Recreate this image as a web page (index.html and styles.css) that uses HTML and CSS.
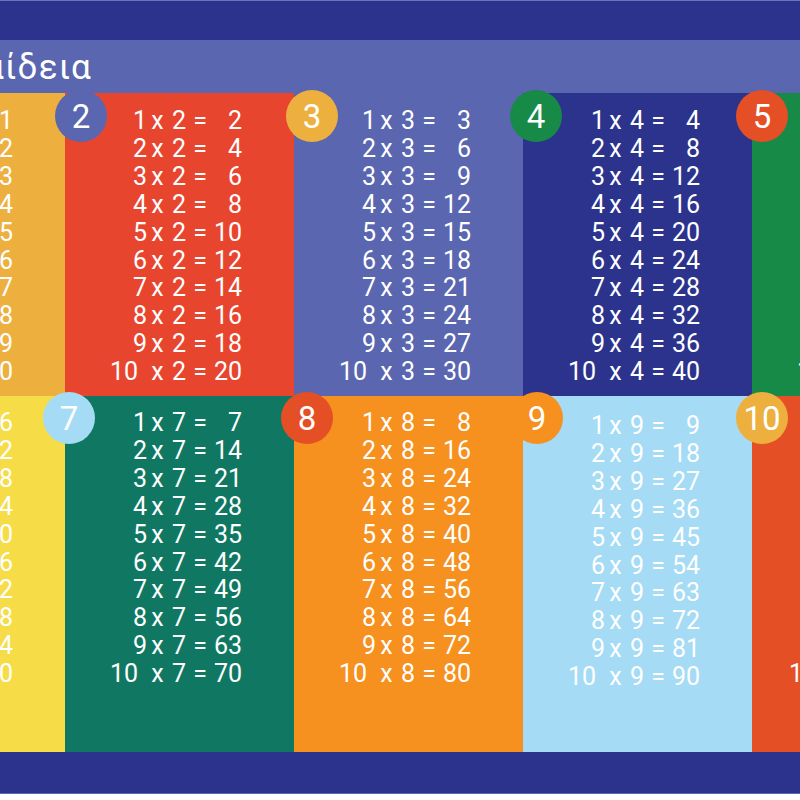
FILE: index.html
```html
<!DOCTYPE html>
<html lang="el">
<head>
<meta charset="utf-8">
<title>Προπαίδεια</title>
<link rel="stylesheet" href="styles.css">
</head>
<body>
<div class="poster">
  <div class="top"></div>
  <div class="header"><h1 class="title">Προπαίδεια</h1></div>
  <div class="grid">
    <div class="col c1">
      <div class="eq"><span>1</span><span>x</span><span>1</span><span>=</span><span>1</span></div>
      <div class="eq"><span>2</span><span>x</span><span>1</span><span>=</span><span>2</span></div>
      <div class="eq"><span>3</span><span>x</span><span>1</span><span>=</span><span>3</span></div>
      <div class="eq"><span>4</span><span>x</span><span>1</span><span>=</span><span>4</span></div>
      <div class="eq"><span>5</span><span>x</span><span>1</span><span>=</span><span>5</span></div>
      <div class="eq"><span>6</span><span>x</span><span>1</span><span>=</span><span>6</span></div>
      <div class="eq"><span>7</span><span>x</span><span>1</span><span>=</span><span>7</span></div>
      <div class="eq"><span>8</span><span>x</span><span>1</span><span>=</span><span>8</span></div>
      <div class="eq"><span>9</span><span>x</span><span>1</span><span>=</span><span>9</span></div>
      <div class="eq"><span class="ten">10</span><span>x</span><span>1</span><span>=</span><span>10</span></div>
    </div>
    <div class="col c2">
      <div class="badge b2">2</div>
      <div class="eq"><span>1</span><span>x</span><span>2</span><span>=</span><span>2</span></div>
      <div class="eq"><span>2</span><span>x</span><span>2</span><span>=</span><span>4</span></div>
      <div class="eq"><span>3</span><span>x</span><span>2</span><span>=</span><span>6</span></div>
      <div class="eq"><span>4</span><span>x</span><span>2</span><span>=</span><span>8</span></div>
      <div class="eq"><span>5</span><span>x</span><span>2</span><span>=</span><span>10</span></div>
      <div class="eq"><span>6</span><span>x</span><span>2</span><span>=</span><span>12</span></div>
      <div class="eq"><span>7</span><span>x</span><span>2</span><span>=</span><span>14</span></div>
      <div class="eq"><span>8</span><span>x</span><span>2</span><span>=</span><span>16</span></div>
      <div class="eq"><span>9</span><span>x</span><span>2</span><span>=</span><span>18</span></div>
      <div class="eq"><span class="ten">10</span><span>x</span><span>2</span><span>=</span><span>20</span></div>
    </div>
    <div class="col c3">
      <div class="badge b3">3</div>
      <div class="eq"><span>1</span><span>x</span><span>3</span><span>=</span><span>3</span></div>
      <div class="eq"><span>2</span><span>x</span><span>3</span><span>=</span><span>6</span></div>
      <div class="eq"><span>3</span><span>x</span><span>3</span><span>=</span><span>9</span></div>
      <div class="eq"><span>4</span><span>x</span><span>3</span><span>=</span><span>12</span></div>
      <div class="eq"><span>5</span><span>x</span><span>3</span><span>=</span><span>15</span></div>
      <div class="eq"><span>6</span><span>x</span><span>3</span><span>=</span><span>18</span></div>
      <div class="eq"><span>7</span><span>x</span><span>3</span><span>=</span><span>21</span></div>
      <div class="eq"><span>8</span><span>x</span><span>3</span><span>=</span><span>24</span></div>
      <div class="eq"><span>9</span><span>x</span><span>3</span><span>=</span><span>27</span></div>
      <div class="eq"><span class="ten">10</span><span>x</span><span>3</span><span>=</span><span>30</span></div>
    </div>
    <div class="col c4">
      <div class="badge b4">4</div>
      <div class="eq"><span>1</span><span>x</span><span>4</span><span>=</span><span>4</span></div>
      <div class="eq"><span>2</span><span>x</span><span>4</span><span>=</span><span>8</span></div>
      <div class="eq"><span>3</span><span>x</span><span>4</span><span>=</span><span>12</span></div>
      <div class="eq"><span>4</span><span>x</span><span>4</span><span>=</span><span>16</span></div>
      <div class="eq"><span>5</span><span>x</span><span>4</span><span>=</span><span>20</span></div>
      <div class="eq"><span>6</span><span>x</span><span>4</span><span>=</span><span>24</span></div>
      <div class="eq"><span>7</span><span>x</span><span>4</span><span>=</span><span>28</span></div>
      <div class="eq"><span>8</span><span>x</span><span>4</span><span>=</span><span>32</span></div>
      <div class="eq"><span>9</span><span>x</span><span>4</span><span>=</span><span>36</span></div>
      <div class="eq"><span class="ten">10</span><span>x</span><span>4</span><span>=</span><span>40</span></div>
    </div>
    <div class="col c5">
      <div class="badge b5">5</div>
      <div class="eq"><span>1</span><span>x</span><span>5</span><span>=</span><span>5</span></div>
      <div class="eq"><span>2</span><span>x</span><span>5</span><span>=</span><span>10</span></div>
      <div class="eq"><span>3</span><span>x</span><span>5</span><span>=</span><span>15</span></div>
      <div class="eq"><span>4</span><span>x</span><span>5</span><span>=</span><span>20</span></div>
      <div class="eq"><span>5</span><span>x</span><span>5</span><span>=</span><span>25</span></div>
      <div class="eq"><span>6</span><span>x</span><span>5</span><span>=</span><span>30</span></div>
      <div class="eq"><span>7</span><span>x</span><span>5</span><span>=</span><span>35</span></div>
      <div class="eq"><span>8</span><span>x</span><span>5</span><span>=</span><span>40</span></div>
      <div class="eq"><span>9</span><span>x</span><span>5</span><span>=</span><span>45</span></div>
      <div class="eq"><span class="ten">10</span><span>x</span><span>5</span><span>=</span><span>50</span></div>
    </div>

    <div class="col c6 low">
      <div class="eq"><span>1</span><span>x</span><span>6</span><span>=</span><span>6</span></div>
      <div class="eq"><span>2</span><span>x</span><span>6</span><span>=</span><span>12</span></div>
      <div class="eq"><span>3</span><span>x</span><span>6</span><span>=</span><span>18</span></div>
      <div class="eq"><span>4</span><span>x</span><span>6</span><span>=</span><span>24</span></div>
      <div class="eq"><span>5</span><span>x</span><span>6</span><span>=</span><span>30</span></div>
      <div class="eq"><span>6</span><span>x</span><span>6</span><span>=</span><span>36</span></div>
      <div class="eq"><span>7</span><span>x</span><span>6</span><span>=</span><span>42</span></div>
      <div class="eq"><span>8</span><span>x</span><span>6</span><span>=</span><span>48</span></div>
      <div class="eq"><span>9</span><span>x</span><span>6</span><span>=</span><span>54</span></div>
      <div class="eq"><span class="ten">10</span><span>x</span><span>6</span><span>=</span><span>60</span></div>
    </div>
    <div class="col c7 low">
      <div class="badge b7">7</div>
      <div class="eq"><span>1</span><span>x</span><span>7</span><span>=</span><span>7</span></div>
      <div class="eq"><span>2</span><span>x</span><span>7</span><span>=</span><span>14</span></div>
      <div class="eq"><span>3</span><span>x</span><span>7</span><span>=</span><span>21</span></div>
      <div class="eq"><span>4</span><span>x</span><span>7</span><span>=</span><span>28</span></div>
      <div class="eq"><span>5</span><span>x</span><span>7</span><span>=</span><span>35</span></div>
      <div class="eq"><span>6</span><span>x</span><span>7</span><span>=</span><span>42</span></div>
      <div class="eq"><span>7</span><span>x</span><span>7</span><span>=</span><span>49</span></div>
      <div class="eq"><span>8</span><span>x</span><span>7</span><span>=</span><span>56</span></div>
      <div class="eq"><span>9</span><span>x</span><span>7</span><span>=</span><span>63</span></div>
      <div class="eq"><span class="ten">10</span><span>x</span><span>7</span><span>=</span><span>70</span></div>
    </div>
    <div class="col c8 low">
      <div class="badge b8">8</div>
      <div class="eq"><span>1</span><span>x</span><span>8</span><span>=</span><span>8</span></div>
      <div class="eq"><span>2</span><span>x</span><span>8</span><span>=</span><span>16</span></div>
      <div class="eq"><span>3</span><span>x</span><span>8</span><span>=</span><span>24</span></div>
      <div class="eq"><span>4</span><span>x</span><span>8</span><span>=</span><span>32</span></div>
      <div class="eq"><span>5</span><span>x</span><span>8</span><span>=</span><span>40</span></div>
      <div class="eq"><span>6</span><span>x</span><span>8</span><span>=</span><span>48</span></div>
      <div class="eq"><span>7</span><span>x</span><span>8</span><span>=</span><span>56</span></div>
      <div class="eq"><span>8</span><span>x</span><span>8</span><span>=</span><span>64</span></div>
      <div class="eq"><span>9</span><span>x</span><span>8</span><span>=</span><span>72</span></div>
      <div class="eq"><span class="ten">10</span><span>x</span><span>8</span><span>=</span><span>80</span></div>
    </div>
    <div class="col c9 low">
      <div class="badge b9">9</div>
      <div class="eq"><span>1</span><span>x</span><span>9</span><span>=</span><span>9</span></div>
      <div class="eq"><span>2</span><span>x</span><span>9</span><span>=</span><span>18</span></div>
      <div class="eq"><span>3</span><span>x</span><span>9</span><span>=</span><span>27</span></div>
      <div class="eq"><span>4</span><span>x</span><span>9</span><span>=</span><span>36</span></div>
      <div class="eq"><span>5</span><span>x</span><span>9</span><span>=</span><span>45</span></div>
      <div class="eq"><span>6</span><span>x</span><span>9</span><span>=</span><span>54</span></div>
      <div class="eq"><span>7</span><span>x</span><span>9</span><span>=</span><span>63</span></div>
      <div class="eq"><span>8</span><span>x</span><span>9</span><span>=</span><span>72</span></div>
      <div class="eq"><span>9</span><span>x</span><span>9</span><span>=</span><span>81</span></div>
      <div class="eq"><span class="ten">10</span><span>x</span><span>9</span><span>=</span><span>90</span></div>
    </div>
    <div class="col c10 low">
      <div class="badge b10">10</div>
      <div class="eq"><span>1</span><span>x</span><span>10</span><span>=</span><span>10</span></div>
      <div class="eq"><span>2</span><span>x</span><span>10</span><span>=</span><span>20</span></div>
      <div class="eq"><span>3</span><span>x</span><span>10</span><span>=</span><span>30</span></div>
      <div class="eq"><span>4</span><span>x</span><span>10</span><span>=</span><span>40</span></div>
      <div class="eq"><span>5</span><span>x</span><span>10</span><span>=</span><span>50</span></div>
      <div class="eq"><span>6</span><span>x</span><span>10</span><span>=</span><span>60</span></div>
      <div class="eq"><span>7</span><span>x</span><span>10</span><span>=</span><span>70</span></div>
      <div class="eq"><span>8</span><span>x</span><span>10</span><span>=</span><span>80</span></div>
      <div class="eq"><span>9</span><span>x</span><span>10</span><span>=</span><span>90</span></div>
      <div class="eq"><span class="ten">10</span><span>x</span><span>10</span><span>=</span><span>100</span></div>
    </div>
  </div>
  <div class="bottom"></div>
</div>
</body>
</html>
```

FILE: styles.css
```css
html, body {
  margin: 0;
  padding: 0;
  background: #ffffff;
  overflow: hidden;
}

.poster {
  width: 1145px;
  margin-left: -164px;
  font-family: Roboto, "Noto Sans", sans-serif;
  color: #ffffff;
}

.top {
  height: 39px;
  background: #2c338d;
  border-top: 1px solid #6b75b9;
}

.header {
  height: 53px;
  background: #5a66b0;
  display: flex;
  align-items: flex-start;
}

.title {
  margin: 0;
  width: 256px;
  text-align: right;
  font-size: 35px;
  font-weight: 400;
  line-height: 53px;
  padding-top: 1px;
  letter-spacing: 1.2px;
}

.grid {
  display: grid;
  grid-template-columns: repeat(5, 229px);
  grid-template-rows: 303px 356px;
}

.col {
  position: relative;
  padding-top: 14px;
  box-sizing: border-box;
}

.col.low {
  padding-top: 13px;
}

.c1 { background: #edb03f; }
.c2 { background: #e8452f; }
.c3 { background: #5a66b0; }
.c4 { background: #2c338d; }
.c5 { background: #178a48; }
.c6 { background: #f6dd48; }
.c7 { background: #107862; }
.c8 { background: #f6901e; }
.col.c9 { background: #a5dbf5; padding-top: 16px; }
.c10 { background: #e54f25; }

.eq {
  display: grid;
  grid-template-columns: 82px 21px 22px 20px 32px;
  font-size: 25px;
  line-height: 27.9px;
  white-space: nowrap;
}

.eq span:nth-child(1) { text-align: right; }
.eq span:nth-child(2),
.eq span:nth-child(3),
.eq span:nth-child(4) { text-align: center; }
.eq span:nth-child(5) { text-align: right; }

.eq .ten { padding-right: 9px; }

.c10 .eq {
  margin-left: -8px;
  grid-template-columns: 82px 21px 32px 22px 46px;
}

.badge {
  position: absolute;
  top: -3px;
  width: 52px;
  height: 52px;
  border-radius: 50%;
  display: flex;
  align-items: center;
  justify-content: center;
  font-size: 33px;
  line-height: 1;
}

.low .badge { top: -4px; }

.b2 { left: -10px; background: #5a66b0; }
.b3 { left: -8px; background: #edb03f; }
.b4 { left: -13px; background: #178a48; }
.b5 { left: -16px; background: #e54f25; }
.b7 { left: -22px; background: #a5dbf5; }
.b8 { left: -13px; background: #e54f25; }
.b9 { left: -12px; background: #f6901e; }
.b10 { left: -16px; background: #edb03f; }

.bottom {
  height: 41px;
  background: #2c338d;
  border-bottom: 1px solid #5a66b0;
}
```
